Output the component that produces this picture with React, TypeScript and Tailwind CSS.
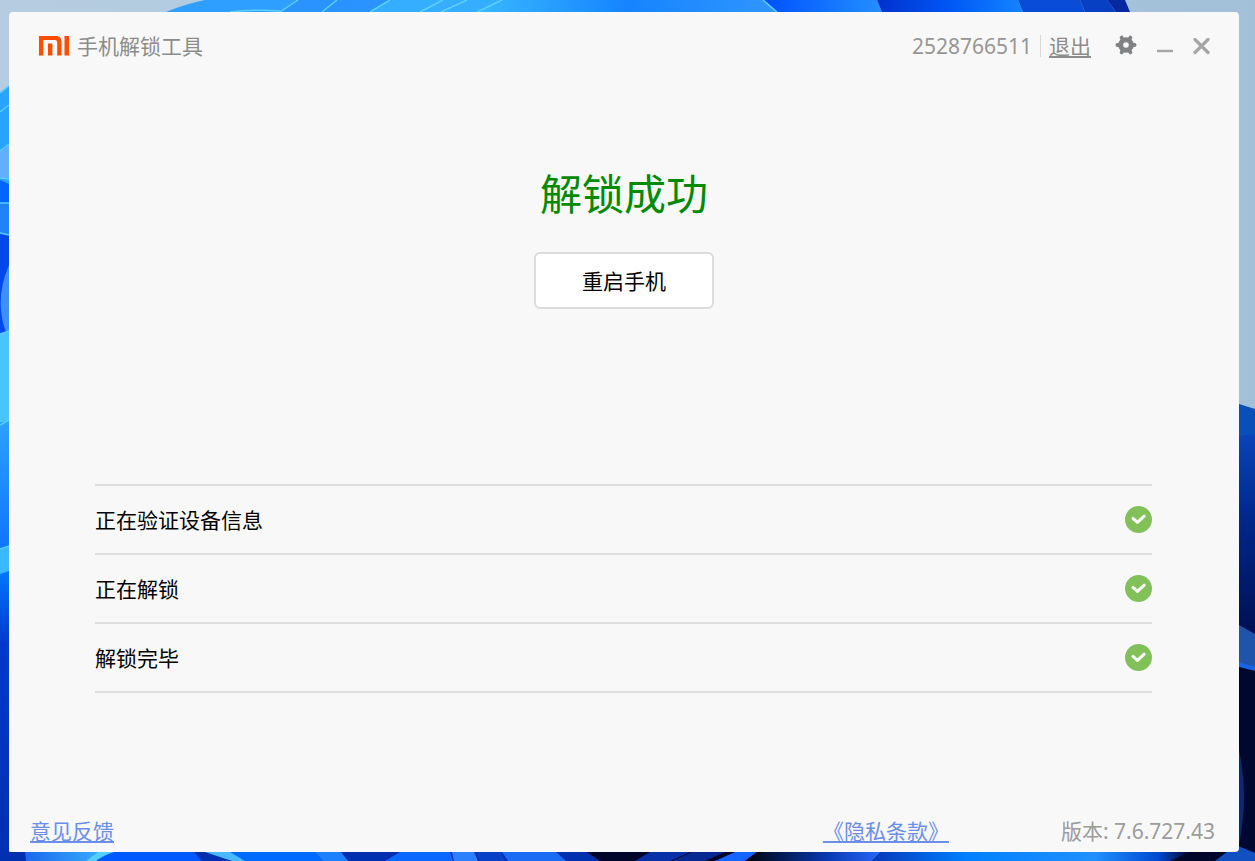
const steps = ["正在验证设备信息", "正在解锁", "解锁完毕"];

const Wallpaper = () => (
  <svg
    className="absolute inset-0 w-full h-full"
    viewBox="0 0 1255 861"
    preserveAspectRatio="none"
    aria-hidden="true"
  >
    <defs>
      <linearGradient id="sky" x1="0" x2="1">
        <stop offset="0" stopColor="#b6cde1" />
        <stop offset="1" stopColor="#a2c0d8" />
      </linearGradient>
      <linearGradient id="topWide" x1="0" x2="1">
        <stop offset="0" stopColor="#38b8ff" />
        <stop offset="0.5" stopColor="#1684ff" />
        <stop offset="1" stopColor="#3096ff" />
      </linearGradient>
      <linearGradient id="topMid" x1="0" x2="1">
        <stop offset="0" stopColor="#0050ff" />
        <stop offset="1" stopColor="#2390ff" />
      </linearGradient>
      <linearGradient id="topDeep" x1="0" x2="1">
        <stop offset="0" stopColor="#0030cc" />
        <stop offset="0.5" stopColor="#0058f5" />
        <stop offset="1" stopColor="#1484ff" />
      </linearGradient>
      <linearGradient id="leftLow" x1="0" y1="0" x2="0" y2="1">
        <stop offset="0" stopColor="#0078ff" />
        <stop offset="0.25" stopColor="#0038cc" />
        <stop offset="1" stopColor="#0030b0" />
      </linearGradient>
      <linearGradient id="leftMid" x1="0" y1="0" x2="0" y2="1">
        <stop offset="0" stopColor="#2fa0ff" />
        <stop offset="1" stopColor="#1074ff" />
      </linearGradient>
      <linearGradient id="rightFall" x1="0" y1="0" x2="0" y2="1">
        <stop offset="0" stopColor="#0a44b8" />
        <stop offset="0.4" stopColor="#00288c" />
        <stop offset="1" stopColor="#000e50" />
      </linearGradient>
      <linearGradient id="bottomGlow" x1="0" x2="1">
        <stop offset="0" stopColor="#0838b8" />
        <stop offset="0.3" stopColor="#0080ff" />
        <stop offset="0.7" stopColor="#2090ff" />
        <stop offset="0.9" stopColor="#0048d0" />
        <stop offset="1" stopColor="#00082c" />
      </linearGradient>
      <linearGradient id="bottomNight" x1="0" x2="1">
        <stop offset="0" stopColor="#000208" />
        <stop offset="0.6" stopColor="#0838b0" />
        <stop offset="1" stopColor="#2868f8" />
      </linearGradient>
      <linearGradient id="bottomStart" x1="0" x2="1">
        <stop offset="0" stopColor="#1c68ec" />
        <stop offset="1" stopColor="#38b0ff" />
      </linearGradient>
    </defs>
    <rect width="1255" height="861" fill="url(#sky)" />

    {/* top petals */}
    <path d="M166 12Q185 4 205 0H510L477 12Z" fill="#2f9fff" />
    <path d="M298 0H390L370 12H280Z" fill="#2b93ff" />
    <path d="M390 0H502L477 12H370Z" fill="#35aeff" />
    <path d="M502 0H763L777 12H477Z" fill="url(#topWide)" />
    <path d="M763 0H877L882 12H777Z" fill="url(#topMid)" />
    <path d="M877 0H1018L1023 12H882Z" fill="url(#topDeep)" />
    <path d="M1018 0H1080L1085 12H1023Z" fill="#084cd8" />
    <path d="M1080 0H1107L1116 12H1085Z" fill="#0840c4" />
    <path d="M1107 0H1125L1130 12H1116Z" fill="#0628a0" />
    <path
      d="M230 12Q255 9 280 11M280 12L298 0M322 12L337 0M370 12L390 0M420 12L443 0M441 12L467 0M477 12L502 0M763 0L777 12"
      fill="none"
      stroke="#5cd0ff"
      strokeWidth="1.5"
    />

    {/* left petals */}
    <path d="M0 93L9 86V861H0Z" fill="#2aa2ff" />
    <path d="M0 151L9 144V178H0Z" fill="#62aeff" />
    <path d="M0 180L9 184V203H0Z" fill="#0064ff" />
    <path d="M0 203H9V234H0Z" fill="#2084f4" />
    <path d="M0 234H9V334H0Z" fill="#0048ec" />
    <path d="M9 265Q-6 300 6 332H9Z" fill="#3d90f5" />
    <path d="M0 334L9 331V422H0Z" fill="#4ac4ff" />
    <path d="M0 425L9 420V548H0Z" fill="url(#leftMid)" />
    <path d="M0 549L9 546V571L0 574Z" fill="#3cb8ff" />
    <path d="M0 574L9 571V861H0Z" fill="url(#leftLow)" />
    <path
      d="M0 93L9 86M0 112L9 105M0 151L9 144M0 178L9 179M0 203H9M0 233L9 235M0 334L9 331M0 425L9 420M0 549L9 546"
      fill="none"
      stroke="#58ccff"
      strokeWidth="1.5"
    />

    {/* right petals */}
    <path d="M1239 404L1255 409V861H1239Z" fill="#0850b8" />
    <path d="M1239 436L1255 434V640H1239Z" fill="url(#rightFall)" />
    <path d="M1239 625L1255 634V672H1239Z" fill="#2054aa" />
    <path d="M1239 662L1255 667V671L1239 667Z" fill="#1464e8" />
    <path d="M1239 667L1255 671V861H1239Z" fill="#000830" />
    <path d="M1239 750Q1249 795 1239 845Z" fill="#0a2a78" />

    {/* bottom petals */}
    <path d="M0 852H1239V861H0Z" fill="#0030b0" />
    <path d="M25 852H106L90 861H26Z" fill="url(#bottomStart)" />
    <path d="M112 852H194L202 861H92Z" fill="#0058ff" />
    <path d="M98 852H114Q102 856 96 861H86Z" fill="#50d0ff" />
    <path d="M205 852H232L248 861H232Z" fill="#48b8ff" />
    <path d="M230 852H315L323 861H245Z" fill="#006cff" />
    <path d="M315 852H341L348 861H323Z" fill="#1c80ff" />
    <path d="M400 852H450L453 861H385Z" fill="#0a68ff" />
    <path d="M452 852H474L478 861H454Z" fill="#2a80ff" />
    <path d="M476 852H500L506 861H480Z" fill="#0840c8" />
    <path d="M502 852H556L566 861H508Z" fill="#1a6cf5" />
    <path d="M587 852H1239V861H600Z" fill="#00062a" />
    <path d="M650 852H690L670 861H635Z" fill="#0830a8" />
    <path d="M692 852H725L705 861H672Z" fill="#062890" />
    <path d="M735 852H757L745 861H715Z" fill="#1464ff" />
    <path d="M757 852H881L872 861H745Z" fill="url(#bottomNight)" />
    <path d="M881 852H1190L1170 861H872Z" fill="url(#bottomGlow)" />
    <path d="M1236 845L1255 853V861H1215Z" fill="#1050c0" />
  </svg>
);

const MiLogo = () => (
  <svg className="shrink-0" width="31" height="20" viewBox="0 0 31 20" fill="#ff4d00" aria-hidden="true">
    <path d="M0 0H16.5C20.5 0 22.5 2 22.5 6V19.5H18.2V6.5C18.2 4.8 17.4 4 15.8 4H4.2V19.5H0Z" />
    <path d="M9 7.5H13.4V19.5H9Z" />
    <path d="M25.5 0H30V19.5H25.5Z" />
  </svg>
);

const GearIcon = () => (
  <svg width="22" height="22" viewBox="0 0 22 22" aria-hidden="true">
    <circle cx="11" cy="10" r="5.3" fill="none" stroke="#808284" strokeWidth="5" />
    <path
      d="M2.4 10H4.6M17.4 10H19.6M6.6 2.6L7.6 4.4M15.4 2.6L14.4 4.4M6.6 17.4L7.6 15.6M15.4 17.4L14.4 15.6"
      stroke="#808284"
      strokeWidth="3.8"
      strokeLinecap="round"
    />
  </svg>
);

const CheckBadge = () => (
  <svg className="shrink-0" width="27" height="27" viewBox="0 0 27 27" role="img" aria-label="完成">
    <circle cx="13.5" cy="13.5" r="13.5" fill="#82c15a" />
    <path
      d="M8 12.4L12.4 16.4L19.2 10.2"
      fill="none"
      stroke="#fff"
      strokeWidth="3"
      strokeLinecap="round"
      strokeLinejoin="round"
    />
  </svg>
);

const App = () => {
  return (
    <div className="relative flex min-h-screen pt-3 pr-4 pb-[9px] pl-[9px] font-['Noto_Sans','Noto_Sans_CJK_SC',sans-serif] text-[21px] leading-7">
      <Wallpaper />

      <div className="relative flex flex-1 flex-col rounded-[4px] bg-[#f8f8f8]">
        <header className="flex items-center justify-between py-5 pl-[30px] pr-[29px]">
          <div className="flex items-center gap-[7px]">
            <MiLogo />
            <h1 className="text-[#8c8c8c]">手机解锁工具</h1>
          </div>

          <div className="flex items-center">
            <span className="text-[#969696]">2528766511</span>
            <span className="mx-2 h-[22px] w-px bg-[#d8d8d8]" />
            <a href="#logout" className="text-[#8c8c8c] underline decoration-2 underline-offset-2">
              退出
            </a>
            <div className="ml-6 flex items-center gap-5">
              <button type="button" aria-label="设置">
                <GearIcon />
              </button>
              <button type="button" aria-label="最小化">
                <svg width="16" height="16" viewBox="0 0 16 16" aria-hidden="true">
                  <path d="M1 13H15" stroke="#a6a6a6" strokeWidth="2.6" strokeLinecap="round" />
                </svg>
              </button>
              <button type="button" aria-label="关闭">
                <svg width="17" height="17" viewBox="0 0 17 17" aria-hidden="true">
                  <path d="M2 1.5L15 14.5M15 1.5L2 14.5" stroke="#a6a6a6" strokeWidth="3.2" strokeLinecap="round" />
                </svg>
              </button>
            </div>
          </div>
        </header>

        <main className="flex flex-col">
          <section className="flex flex-col items-center pt-[86px]">
            <h2 className="text-[42px] leading-[56px] text-[#008a00]">解锁成功</h2>
            <button
              type="button"
              className="mt-[30px] h-[57px] w-[180px] rounded-md border-2 border-[#dcdcdc] bg-white text-black"
            >
              重启手机
            </button>
          </section>

          <ul className="ml-[86px] mr-[87px] mt-[175px] border-t-2 border-[#dedede]">
            {steps.map((step) => (
              <li
                key={step}
                className="flex h-[69px] items-center justify-between border-b-2 border-[#dedede] text-black"
              >
                <span>{step}</span>
                <CheckBadge />
              </li>
            ))}
          </ul>
        </main>

        <footer className="mt-auto flex items-center justify-between pb-[7px] pl-[21px] pr-6">
          <a href="#feedback" className="text-[#6b8ee8] underline decoration-2 underline-offset-2">
            意见反馈
          </a>
          <div className="flex items-center gap-28">
            <a href="#privacy" className="text-[#6b8ee8] underline decoration-2 underline-offset-2">
              《隐私条款》
            </a>
            <span className="text-[#9c9c9c]">版本: 7.6.727.43</span>
          </div>
        </footer>
      </div>
    </div>
  );
};

export default App;
